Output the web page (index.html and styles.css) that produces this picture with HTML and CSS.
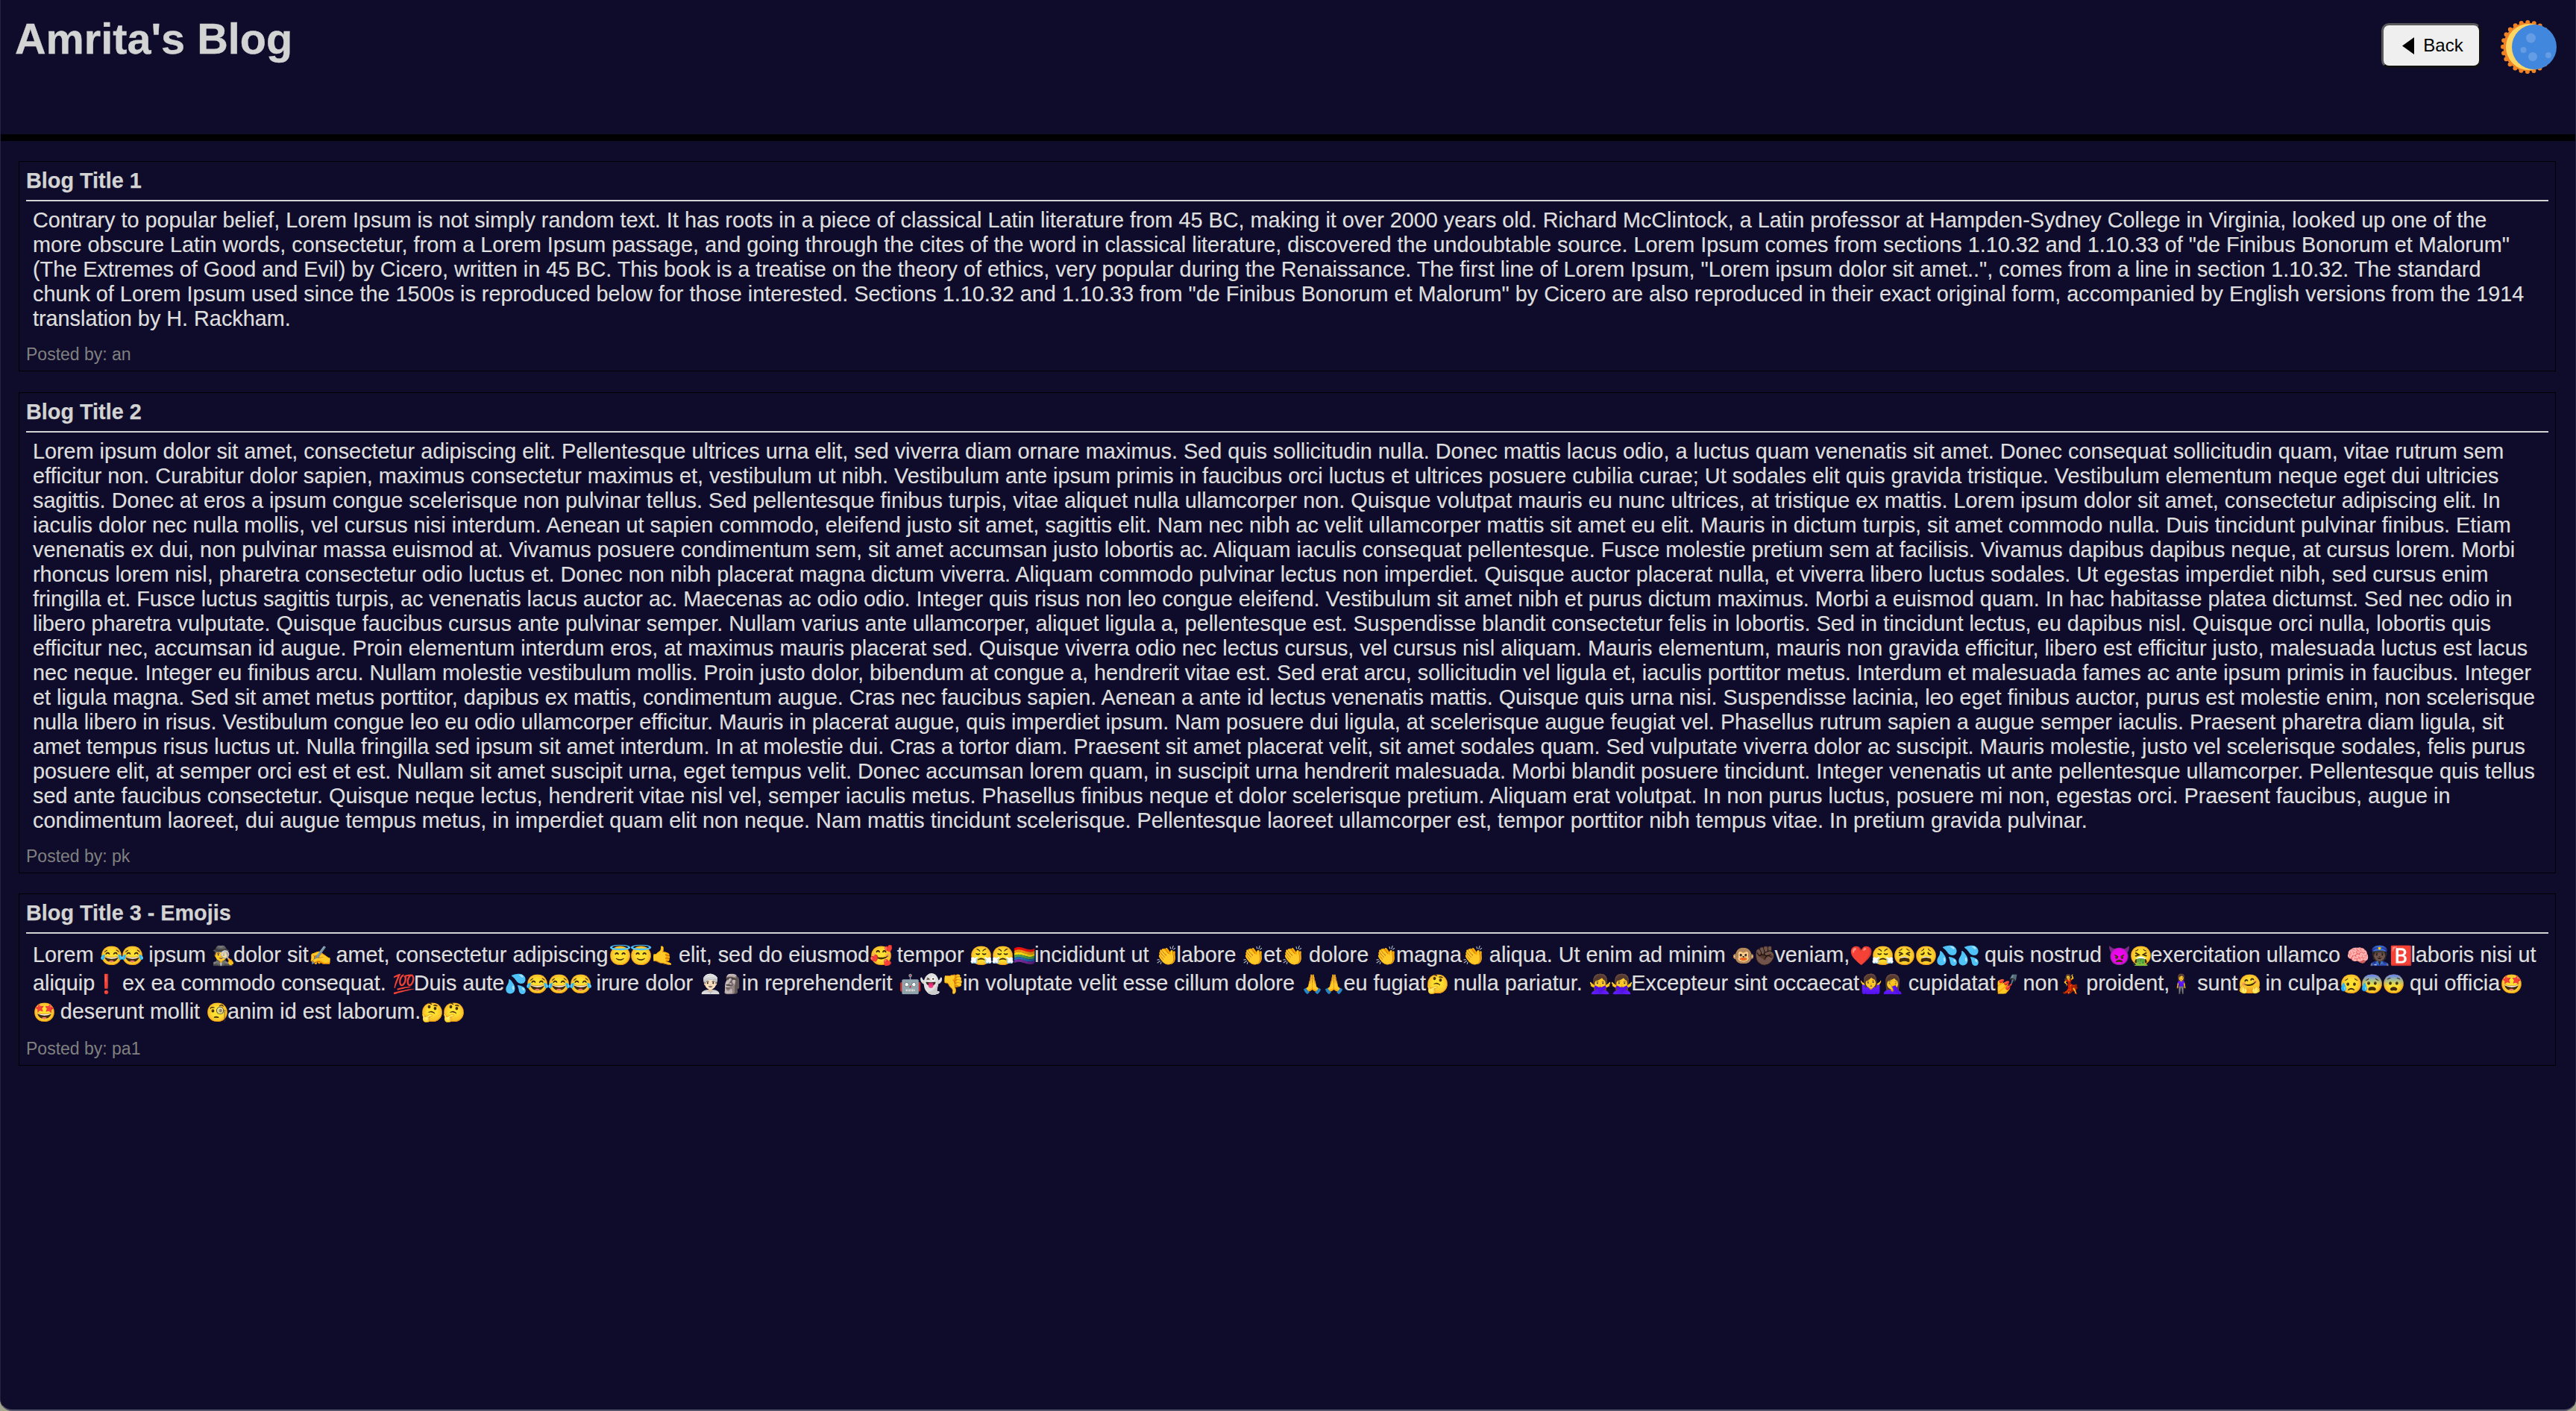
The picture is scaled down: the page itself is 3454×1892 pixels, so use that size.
FILE: index.html
```html
<!DOCTYPE html>
<html lang="en">
<head>
<meta charset="utf-8">
<title>Amrita's Blog</title>
<link rel="stylesheet" href="styles.css">
</head>
<body>
<header class="topbar">
  <h1 class="brand">Amrita's Blog</h1>
  <div class="actions">
    <button class="back" type="button">
      <svg class="back-arrow" viewBox="0 0 16 23" aria-hidden="true"><polygon points="16,0 16,23 0,11.5"/></svg>
      <span>Back</span>
    </button>
    <svg class="theme" viewBox="0 0 76 72" aria-hidden="true">
      <circle cx="36" cy="36" r="32.5" fill="#ee8224"/>
      <circle class="teeth" cx="36" cy="36" r="33"/>
      <circle cx="38" cy="36" r="31" fill="#fcd462"/>
      <circle cx="45" cy="36" r="30" fill="#4187dd"/>
      <g fill="#659de4">
        <circle cx="40.5" cy="24" r="6.5"/>
        <circle cx="30.5" cy="40" r="4"/>
        <circle cx="43" cy="49" r="6"/>
        <circle cx="64" cy="47" r="4"/>
      </g>
    </svg>
  </div>
</header>
<main class="posts">
  <article class="post">
    <h2 class="post-title">Blog Title 1</h2>
    <hr class="rule">
    <p class="post-body">Contrary to popular belief, Lorem Ipsum is not simply random text. It has roots in a piece of classical Latin literature from 45 BC, making it over 2000 years old. Richard McClintock, a Latin professor at Hampden-Sydney College in Virginia, looked up one of the more obscure Latin words, consectetur, from a Lorem Ipsum passage, and going through the cites of the word in classical literature, discovered the undoubtable source. Lorem Ipsum comes from sections 1.10.32 and 1.10.33 of "de Finibus Bonorum et Malorum" (The Extremes of Good and Evil) by Cicero, written in 45 BC. This book is a treatise on the theory of ethics, very popular during the Renaissance. The first line of Lorem Ipsum, "Lorem ipsum dolor sit amet..", comes from a line in section 1.10.32. The standard chunk of Lorem Ipsum used since the 1500s is reproduced below for those interested. Sections 1.10.32 and 1.10.33 from "de Finibus Bonorum et Malorum" by Cicero are also reproduced in their exact original form, accompanied by English versions from the 1914 translation by H. Rackham.</p>
    <p class="post-author">Posted by: an</p>
  </article>
  <article class="post">
    <h2 class="post-title">Blog Title 2</h2>
    <hr class="rule">
    <p class="post-body">Lorem ipsum dolor sit amet, consectetur adipiscing elit. Pellentesque ultrices urna elit, sed viverra diam ornare maximus. Sed quis sollicitudin nulla. Donec mattis lacus odio, a luctus quam venenatis sit amet. Donec consequat sollicitudin quam, vitae rutrum sem efficitur non. Curabitur dolor sapien, maximus consectetur maximus et, vestibulum ut nibh. Vestibulum ante ipsum primis in faucibus orci luctus et ultrices posuere cubilia curae; Ut sodales elit quis gravida tristique. Vestibulum elementum neque eget dui ultricies sagittis. Donec at eros a ipsum congue scelerisque non pulvinar tellus. Sed pellentesque finibus turpis, vitae aliquet nulla ullamcorper non. Quisque volutpat mauris eu nunc ultrices, at tristique ex mattis. Lorem ipsum dolor sit amet, consectetur adipiscing elit. In iaculis dolor nec nulla mollis, vel cursus nisi interdum. Aenean ut sapien commodo, eleifend justo sit amet, sagittis elit. Nam nec nibh ac velit ullamcorper mattis sit amet eu elit. Mauris in dictum turpis, sit amet commodo nulla. Duis tincidunt pulvinar finibus. Etiam venenatis ex dui, non pulvinar massa euismod at. Vivamus posuere condimentum sem, sit amet accumsan justo lobortis ac. Aliquam iaculis consequat pellentesque. Fusce molestie pretium sem at facilisis. Vivamus dapibus dapibus neque, at cursus lorem. Morbi rhoncus lorem nisl, pharetra consectetur odio luctus et. Donec non nibh placerat magna dictum viverra. Aliquam commodo pulvinar lectus non imperdiet. Quisque auctor placerat nulla, et viverra libero luctus sodales. Ut egestas imperdiet nibh, sed cursus enim fringilla et. Fusce luctus sagittis turpis, ac venenatis lacus auctor ac. Maecenas ac odio odio. Integer quis risus non leo congue eleifend. Vestibulum sit amet nibh et purus dictum maximus. Morbi a euismod quam. In hac habitasse platea dictumst. Sed nec odio in libero pharetra vulputate. Quisque faucibus cursus ante pulvinar semper. Nullam varius ante ullamcorper, aliquet ligula a, pellentesque est. Suspendisse blandit consectetur felis in lobortis. Sed in tincidunt lectus, eu dapibus nisl. Quisque orci nulla, lobortis quis efficitur nec, accumsan id augue. Proin elementum interdum eros, at maximus mauris placerat sed. Quisque viverra odio nec lectus cursus, vel cursus nisl aliquam. Mauris elementum, mauris non gravida efficitur, libero est efficitur justo, malesuada luctus est lacus nec neque. Integer eu finibus arcu. Nullam molestie vestibulum mollis. Proin justo dolor, bibendum at congue a, hendrerit vitae est. Sed erat arcu, sollicitudin vel ligula et, iaculis porttitor metus. Interdum et malesuada fames ac ante ipsum primis in faucibus. Integer et ligula magna. Sed sit amet metus porttitor, dapibus ex mattis, condimentum augue. Cras nec faucibus sapien. Aenean a ante id lectus venenatis mattis. Quisque quis urna nisi. Suspendisse lacinia, leo eget finibus auctor, purus est molestie enim, non scelerisque nulla libero in risus. Vestibulum congue leo eu odio ullamcorper efficitur. Mauris in placerat augue, quis imperdiet ipsum. Nam posuere dui ligula, at scelerisque augue feugiat vel. Phasellus rutrum sapien a augue semper iaculis. Praesent pharetra diam ligula, sit amet tempus risus luctus ut. Nulla fringilla sed ipsum sit amet interdum. In at molestie dui. Cras a tortor diam. Praesent sit amet placerat velit, sit amet sodales quam. Sed vulputate viverra dolor ac suscipit. Mauris molestie, justo vel scelerisque sodales, felis purus posuere elit, at semper orci est et est. Nullam sit amet suscipit urna, eget tempus velit. Donec accumsan lorem quam, in suscipit urna hendrerit malesuada. Morbi blandit posuere tincidunt. Integer venenatis ut ante pellentesque ullamcorper. Pellentesque quis tellus sed ante faucibus consectetur. Quisque neque lectus, hendrerit vitae nisl vel, semper iaculis metus. Phasellus finibus neque et dolor scelerisque pretium. Aliquam erat volutpat. In non purus luctus, posuere mi non, egestas orci. Praesent faucibus, augue in condimentum laoreet, dui augue tempus metus, in imperdiet quam elit non neque. Nam mattis tincidunt scelerisque. Pellentesque laoreet ullamcorper est, tempor porttitor nibh tempus vitae. In pretium gravida pulvinar.</p>
    <p class="post-author">Posted by: pk</p>
  </article>
  <article class="post">
    <h2 class="post-title">Blog Title 3 - Emojis</h2>
    <hr class="rule">
    <p class="post-body post-body-emoji">Lorem <span class="e">😂😂</span> ipsum <span class="e">🕵️‍♂️</span>dolor sit<span class="e">✍️</span> amet, consectetur adipiscing<span class="e">😇😇🤙</span> elit, sed do eiusmod<span class="e">🥰</span> tempor <span class="e">😤😤🏳️‍🌈</span>incididunt ut <span class="e">👏</span>labore <span class="e">👏</span>et<span class="e">👏</span> dolore <span class="e">👏</span>magna<span class="e">👏</span> aliqua. Ut enim ad minim <span class="e">🐵✊🏿</span>veniam,<span class="e">❤️😤😫😩💦💦</span> quis nostrud <span class="e">👿🤮</span>exercitation ullamco <span class="e">🧠👮🏿🅱️</span>laboris nisi ut aliquip<span class="e">❗</span> ex ea commodo consequat. <span class="e">💯</span>Duis aute<span class="e">💦😂😂😂</span> irure dolor <span class="e">👳🏻‍♂️🗿</span>in reprehenderit <span class="e">🤖👻👎</span>in voluptate velit esse cillum dolore <span class="e">🙏🙏</span>eu fugiat<span class="e">🤔</span> nulla pariatur. <span class="e">🙅‍♀️🙅‍♀️</span>Excepteur sint occaecat<span class="e">🤷‍♀️🤦‍♀️</span> cupidatat<span class="e">💅</span> non<span class="e">💃</span> proident,<span class="e">🧍‍♀️</span> sunt<span class="e">🤗</span> in culpa<span class="e">😥😰😨</span> qui officia<span class="e">🤩</span> <span class="e">🤩</span> deserunt mollit <span class="e">🧐</span>anim id est laborum.<span class="e">🤔🤔</span></p>
    <p class="post-author">Posted by: pa1</p>
  </article>
</main>
</body>
</html>
```
FILE: styles.css
```css
html {
  height: 100%;
  background: #a3a58c;
}

body {
  box-sizing: border-box;
  height: 100%;
  margin: 0;
  border: solid #24223e;
  border-width: 0 1px 2px;
  border-bottom-color: #55556b;
  border-radius: 0 0 16px 16px;
  background: #0e0c2a;
  color: #d3d3d3;
  font-family: "Liberation Sans", Arial, sans-serif;
  font-size: 28.8px;
}

.topbar {
  display: flex;
  justify-content: space-between;
  align-items: flex-start;
  height: 161px;
  padding: 19px 24px 0 19px;
  border-bottom: 9px solid #000;
}

.brand {
  margin: 0;
  font-size: 57.6px;
  font-weight: 700;
  line-height: 66px;
  color: #d3d3d3;
  -webkit-text-stroke: 0.4px #d3d3d3;
}

.actions {
  display: flex;
  align-items: flex-start;
  gap: 26px;
  padding-top: 8px;
}

.back {
  display: flex;
  align-items: center;
  justify-content: center;
  gap: 12px;
  box-sizing: border-box;
  width: 134px;
  height: 60px;
  margin-top: 4px;
  padding: 0 0 0 4px;
  border: 3px solid;
  border-color: #5a5a5a #111 #111 #5a5a5a;
  border-radius: 10px;
  background: #efefef;
  color: #000;
  font-family: inherit;
  font-size: 24px;
}

.back-arrow {
  width: 16px;
  height: 23px;
  fill: #000;
}

.theme {
  display: block;
  width: 76px;
  height: 72px;
}

.teeth {
  fill: none;
  stroke: #ee8224;
  stroke-width: 6;
  stroke-linecap: round;
  stroke-dasharray: 0 8.64;
}

.posts {
  display: flex;
  flex-direction: column;
  gap: 27.5px;
  padding: 27px 26px 0 24px;
}

.post {
  padding: 9px;
  border: 1px solid #000;
}

.post-title {
  margin: 0;
  font-size: 28.8px;
  font-weight: 700;
  line-height: 33px;
  color: #d3d3d3;
  -webkit-text-stroke: 0.25px #d3d3d3;
}

.rule {
  height: 2px;
  margin: 9px 0;
  border: 0;
  background: #d3d3d3;
}

.post-body {
  margin: 0;
  padding: 0 14px 0 9px;
  line-height: 33px;
  color: #dedede;
  -webkit-text-stroke: 0.2px #dedede;
}

.post-body-emoji {
  padding-right: 8px;
  line-height: 38px;
}

.e {
  font-size: 25px;
  line-height: 1;
  letter-spacing: -2.2px;
  -webkit-text-stroke: 0;
}

.post-author {
  margin: 18px 0 0;
  font-size: 23px;
  line-height: 26px;
  color: #808080;
}
```
